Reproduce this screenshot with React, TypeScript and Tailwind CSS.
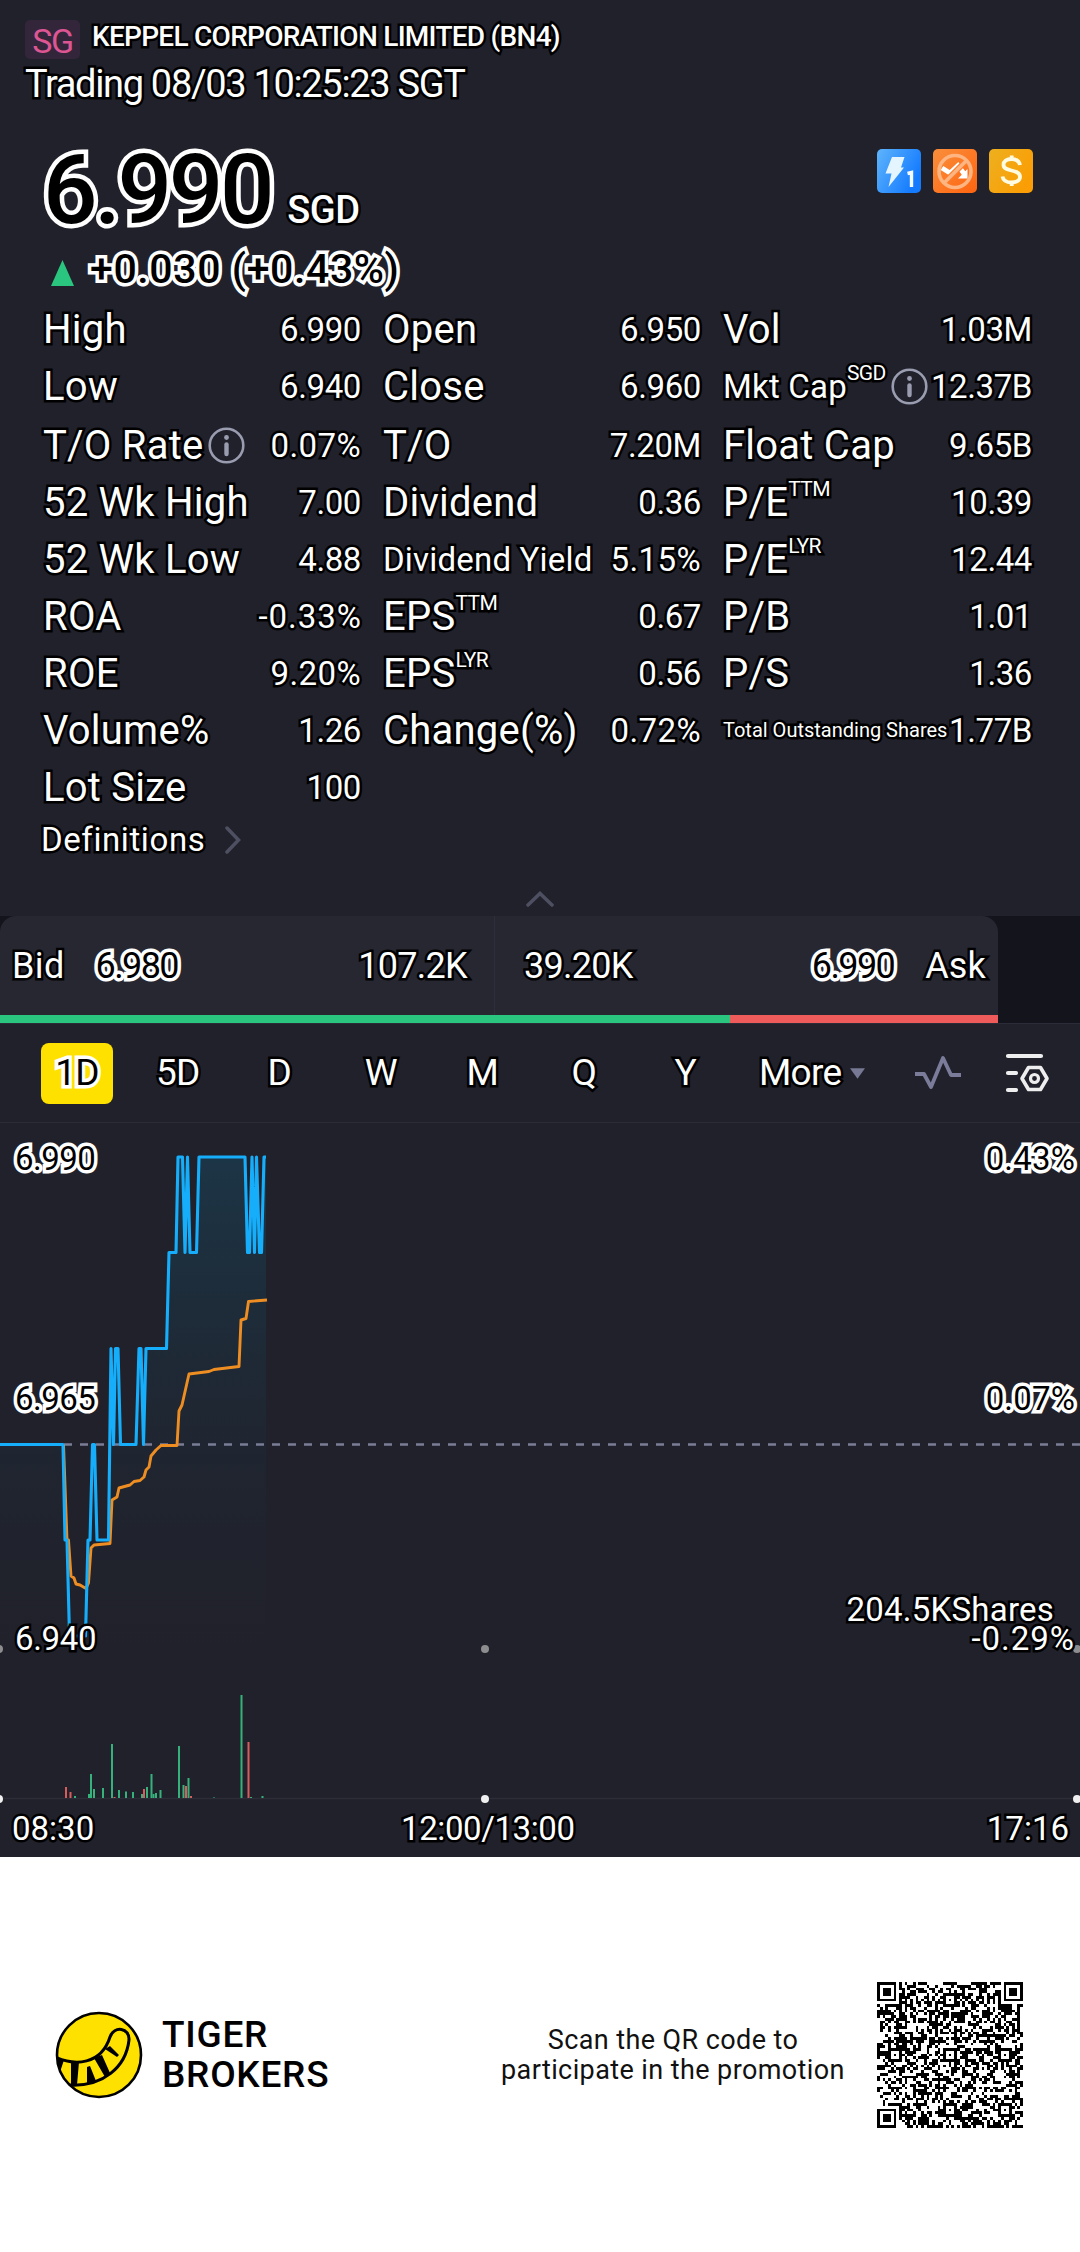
import type { ReactNode } from "react";

type Stat = { label: ReactNode; value: string; small?: "md" | "xs"; info?: boolean };

const outline = "text-white [paint-order:stroke_fill] [-webkit-text-stroke:5px_black]";
const outlineInverse = "text-black [paint-order:stroke_fill] [-webkit-text-stroke:7px_white]";

const withSup = (text: string, sup: string, align = "align-[20px]") => (
  <>
    {text}
    <span className={`text-[21px] leading-[0] tracking-[-0.03em] ${align}`}>{sup}</span>
  </>
);

const columns: { width: string; stats: Stat[] }[] = [
  {
    width: "w-[318px]",
    stats: [
      { label: "High", value: "6.990" },
      { label: "Low", value: "6.940" },
      { label: "T/O Rate", value: "0.07%", info: true },
      { label: "52 Wk High", value: "7.00" },
      { label: "52 Wk Low", value: "4.88" },
      { label: "ROA", value: "-0.33%" },
      { label: "ROE", value: "9.20%" },
      { label: "Volume%", value: "1.26" },
      { label: "Lot Size", value: "100" },
    ],
  },
  {
    width: "w-[318px]",
    stats: [
      { label: "Open", value: "6.950" },
      { label: "Close", value: "6.960" },
      { label: "T/O", value: "7.20M" },
      { label: "Dividend", value: "0.36" },
      { label: "Dividend Yield", value: "5.15%", small: "md" },
      { label: withSup("EPS", "TTM"), value: "0.67" },
      { label: withSup("EPS", "LYR"), value: "0.56" },
      { label: "Change(%)", value: "0.72%" },
    ],
  },
  {
    width: "w-[309px]",
    stats: [
      { label: "Vol", value: "1.03M" },
      { label: withSup("Mkt Cap", "SGD", "align-[18px]"), value: "12.37B", small: "md", info: true },
      { label: "Float Cap", value: "9.65B" },
      { label: withSup("P/E", "TTM"), value: "10.39" },
      { label: withSup("P/E", "LYR"), value: "12.44" },
      { label: "P/B", value: "1.01" },
      { label: "P/S", value: "1.36" },
      { label: "Total Outstanding Shares", value: "1.77B", small: "xs" },
    ],
  },
];

const labelSize = {
  lg: "text-[40px] tracking-[0.006em]",
  md: "text-[33px] tracking-[0.006em]",
  xs: "text-[20px] [-webkit-text-stroke-width:4px]",
};

// percentages are set a little wider than plain numbers
function valueTracking(value: string) {
  if (value.startsWith("-")) return "tracking-[0.03em] -mr-px";
  if (value.endsWith("%")) return "tracking-[0.012em]";
  return "tracking-[-0.012em]";
}

function InfoIcon() {
  return (
    <svg width="37" height="37" viewBox="0 0 37 37" className="shrink-0">
      <circle cx="18.5" cy="18.5" r="16.8" fill="none" stroke="#9a9cb0" strokeWidth="2.6" />
      <circle cx="18.5" cy="10.5" r="2.4" fill="#9a9cb0" />
      <path d="M18.5 17.500v9.500" stroke="#9a9cb0" strokeWidth="4.400" strokeLinecap="round" />
    </svg>
  );
}

function StatRow({ stat, spaced }: { stat: Stat; spaced: boolean }) {
  return (
    <div className={`flex h-[57px] items-center justify-between whitespace-nowrap ${spaced ? "mt-[2px]" : ""}`}>
      <div className="flex items-center gap-[5px]">
        <span className={`leading-[57px] ${outline} ${labelSize[stat.small ?? "lg"]}`}>{stat.label}</span>
        {stat.info && <InfoIcon />}
      </div>
      <span className={`text-[33px] leading-[57px] ${valueTracking(stat.value)} ${outline}`}>{stat.value}</span>
    </div>
  );
}

function Badges() {
  return (
    <div className="flex gap-3">
      <svg width="44" height="44" viewBox="0 0 44 44">
        <defs>
          <linearGradient id="blue" x1="0" y1="0" x2="1" y2="0.5">
            <stop offset="0" stopColor="#5fb4fb" />
            <stop offset="1" stopColor="#147bff" />
          </linearGradient>
        </defs>
        <rect width="44" height="44" rx="5" fill="url(#blue)" />
        <path d="M15 8h12.500l-3.500 10.500h3L11.500 38l3-13.500H8.500z" fill="#e4f5ff" />
        <path d="M30.500 24.500l4-1v14.500" fill="none" stroke="#f4fbff" strokeWidth="3.400" />
      </svg>
      <svg width="44" height="44" viewBox="0 0 44 44">
        <defs>
          <linearGradient id="orange" x1="0" y1="0" x2="1" y2="1">
            <stop offset="0" stopColor="#f98f3c" />
            <stop offset="1" stopColor="#ff6410" />
          </linearGradient>
        </defs>
        <rect width="44" height="44" rx="5" fill="url(#orange)" />
        <path d="M9 19l8 5 8-7.500 7 9.500" fill="none" stroke="#fff" strokeWidth="4.800" />
        <path d="M34.500 20v9.500H25z" fill="#fff" />
        <path d="M33.500 11.500l-22.500 22.500" stroke="#ff7a2a" strokeWidth="6" />
        <path d="M33.500 11.500l-22.500 22.500" stroke="#ffb581" strokeWidth="3.600" />
        <circle cx="22" cy="22.500" r="16" fill="none" stroke="#ffb581" strokeWidth="3.600" />
      </svg>
      <svg width="44" height="44" viewBox="0 0 44 44">
        <defs>
          <linearGradient id="gold" x1="0" y1="0" x2="1" y2="0.6">
            <stop offset="0" stopColor="#edb01f" />
            <stop offset="1" stopColor="#fb9d04" />
          </linearGradient>
        </defs>
        <rect width="44" height="44" rx="5" fill="url(#gold)" />
        <path
          d="M31 16c-.8-4-4.300-6-8.500-6-4.800 0-8 2.300-8 5.800 0 3.700 3.500 4.700 8 5.700 4.800 1.100 8.500 2.200 8.500 6.200 0 3.600-3.500 5.800-8.500 5.800-4.800 0-8.300-2-9-6M22.700 6.500v4M22.700 33v4"
          fill="none"
          stroke="#fffbe0"
          strokeWidth="3.800"
        />
      </svg>
    </div>
  );
}

const bluePoints =
  "0,1444.5 63,1444.5 65,1540 67,1540 69.5,1636 85.5,1636 88,1540 90,1540 92.5,1444.5 94.5,1444.5 97,1540 108.5,1540 111,1348.5 113.5,1444.5 115.500,1348.500 118,1348.500 120.500,1444.500 136,1444.500 139,1348.500 141,1348.500 143.500,1444.500 146,1348.500 166.500,1348.500 169,1252.500 176,1252.500 178,1157 182.500,1157 185,1252.500 187.500,1157 190,1252.500 196.500,1252.500 199,1157 245,1157 247.500,1252.500 249.500,1252.500 252,1157 254.500,1252.500 256.500,1157 259.500,1252.500 261.500,1252.500 264,1157 266,1157";

const orangePoints =
  "63.5,1444.5 67,1540 68.5,1540 71,1576 74,1578 76,1584 80,1585 86,1588.500 88.500,1583 91,1548 94,1545 110,1543.500 112,1500 117,1497 119,1488 130,1485 134,1481.500 140,1480.500 144,1477 146,1470 149,1467 151,1456 156,1450 161,1445.500 177,1445.500 179,1411 182,1405 189,1374 209,1371.500 214,1369.500 239,1366.500 241,1320 246,1318.500 248.500,1301.500 267,1300";

// x, height, colour
const volumeBars: [number, number, "g" | "r"][] = [
  [66, 11, "r"], [70.5, 6, "r"], [75, 2, "g"], [89, 4, "g"], [91, 24, "g"], [94, 9, "g"],
  [103, 10, "g"], [112, 54, "g"], [114.5, 1, "r"], [119, 8, "g"], [126, 6.5, "g"], [133, 6, "g"],
  [142, 4, "g"], [144, 9, "r"], [147, 11, "g"], [151.5, 24, "g"], [153.5, 4, "g"], [156, 5, "g"],
  [160.5, 8, "g"], [179, 52, "g"], [183.5, 13, "g"], [186, 12, "r"], [188.5, 20, "g"], [191, 2, "r"],
  [214, 0.5, "g"], [241.5, 103, "g"], [248.5, 56, "r"], [251, 1, "g"], [262.5, 2, "g"],
];

function Chart() {
  const axis = "absolute text-[33px] leading-[28px]";
  return (
    <div className="relative h-[734px] overflow-hidden">
      <svg width="1080" height="734" viewBox="0 1123 1080 734" className="block">
        <defs>
          <linearGradient id="area" gradientUnits="userSpaceOnUse" x1="0" y1="1157" x2="0" y2="1650">
            <stop offset="0" stopColor="#1c3546" />
            <stop offset="1" stopColor="#1f222b" stopOpacity="0.2" />
          </linearGradient>
        </defs>
        <polygon points={`0,1650 ${bluePoints} 266,1650`} fill="url(#area)" />
        <path d="M0 1444.500H1080" stroke="#7b7d96" strokeWidth="2.500" strokeDasharray="8 8" />
        <polyline points={orangePoints} fill="none" stroke="#ee8e22" strokeWidth="2.900" strokeLinejoin="round" />
        <polyline points={bluePoints} fill="none" stroke="#16aefb" strokeWidth="3.100" strokeLinejoin="round" />
        <path d="M0 1798.500H1080" stroke="#2d2d39" strokeWidth="1.500" />
        {volumeBars.map(([x, h, c]) => (
          <rect key={x} x={x - 1} y={1798 - h} width="2" height={h} fill={c === "g" ? "#35b27b" : "#d95c5c"} />
        ))}
        {[-1, 485, 1077].map((x) => (
          <g key={x}>
            <circle cx={x} cy="1649" r="4" fill="#8d8d90" />
            <circle cx={x} cy="1799" r="4" fill="#f0f0f0" />
          </g>
        ))}
      </svg>
      <span className={`${axis} ${outlineInverse} left-[15px] top-[22px] tracking-[-0.015em]`}>6.990</span>
      <span className={`${axis} ${outlineInverse} left-[15px] top-[262px] tracking-[-0.015em]`}>6.965</span>
      <span className={`${axis} ${outline} left-[15px] top-[502px] tracking-[-0.01em]`}>6.940</span>
      <span className={`${axis} ${outlineInverse} right-[5px] top-[22px] tracking-[0.005em]`}>0.43%</span>
      <span className={`${axis} ${outlineInverse} right-[5px] top-[262px] tracking-[0.005em]`}>0.07%</span>
      <span className={`${axis} ${outline} right-[26px] top-[473px] tracking-[0.007em]`}>204.5KShares</span>
      <span className={`${axis} ${outline} right-[5px] top-[502px] tracking-[0.03em]`}>-0.29%</span>
      <span className={`${axis} ${outline} left-[12px] top-[692px]`}>08:30</span>
      <span className={`${axis} ${outline} left-[401px] top-[692px] tracking-[-0.012em]`}>12:00/13:00</span>
      <span className={`${axis} ${outline} right-[11px] top-[692px]`}>17:16</span>
    </div>
  );
}

function TigerLogo() {
  return (
    <svg width="88" height="88" viewBox="0 0 88 88">
      <defs>
        <clipPath id="disc">
          <circle cx="44" cy="44" r="42" />
        </clipPath>
      </defs>
      <circle cx="44" cy="44" r="42" fill="#ffe100" />
      <g clipPath="url(#disc)">
        <path d="M0 46C20 55 46 54 55 26c4-12 20-9 19 3C71 56 48 76 14 74" fill="none" stroke="#000" strokeWidth="3" />
        <path d="M0 45l9 4-4 12H0zM16 51h8l-2 23h-6zM39 47l8-3 8 18-5 4zM50 38l5-3 9 9-2 2zM32 56l3-1 6 15-9 3z" fill="#000" />
      </g>
      <circle cx="44" cy="44" r="42" fill="none" stroke="#000" strokeWidth="2.600" />
    </svg>
  );
}

const QR_SIZE = 53;

function inFinder(x: number, y: number) {
  return (x < 8 && y < 8) || (x > QR_SIZE - 9 && y < 8) || (x < 8 && y > QR_SIZE - 9);
}

function qrPath() {
  let seed = 20230803;
  let d = "";
  const centers = [6, 26, 46];
  for (let y = 0; y < QR_SIZE; y++) {
    for (let x = 0; x < QR_SIZE; x++) {
      seed = (seed * 1103515245 + 12345) % 2147483648;
      let dark = (seed >> 16) % 2 === 0;
      if (x === 6 || y === 6) dark = (x + y) % 2 === 0;
      const cx = centers.find((c) => Math.abs(c - x) < 3);
      const cy = centers.find((c) => Math.abs(c - y) < 3);
      if (cx !== undefined && cy !== undefined) {
        dark = Math.max(Math.abs(cx - x), Math.abs(cy - y)) !== 1;
      }
      if (dark && !inFinder(x, y)) d += `M${x} ${y}h1v1h-1z`;
    }
  }
  return d;
}

function QrCode() {
  return (
    <svg width="146" height="146" viewBox={`0 0 ${QR_SIZE} ${QR_SIZE}`} shapeRendering="crispEdges">
      <path d={qrPath()} />
      {[[0, 0], [46, 0], [0, 46]].map(([x, y]) => (
        <g key={`${x}-${y}`}>
          <path fillRule="evenodd" d={`M${x} ${y}h7v7h-7zM${x + 1} ${y + 1}v5h5v-5z`} />
          <rect x={x + 2} y={y + 2} width="3" height="3" />
        </g>
      ))}
    </svg>
  );
}

const ranges = ["5D", "D", "W", "M", "Q", "Y"];

export default function App() {
  return (
    <main className="h-[2252px] w-[1080px] overflow-hidden bg-white font-['Roboto',sans-serif]">
      <div className="bg-[#21212b]">
        <header className="flex h-[118px] flex-col pl-[25px] pt-5">
          <div className="flex h-[39px] gap-3">
            <span className="flex h-[39px] w-[55px] items-center justify-center rounded-[5px] bg-[#33263a] pt-[3px] text-[34px] tracking-[-0.04em] text-[#dd5593]">
              SG
            </span>
            <h1 className={`text-[28px] font-medium leading-[34px] tracking-[-0.026em] ${outline}`}>
              KEPPEL CORPORATION LIMITED (BN4)
            </h1>
          </div>
          <p className={`mt-[3px] text-[38px] leading-[44px] tracking-[-0.035em] ${outline}`}>Trading 08/03 10:25:23 SGT</p>
        </header>

        <section className="flex h-[183px] justify-between pl-[43px] pr-[47px]">
          <div>
            <div className="mt-[4px] flex h-[125px] items-baseline gap-4 leading-[136px]">
              <span className="text-[96px] font-medium tracking-[-0.035em] text-black [-webkit-text-stroke:9px_white] [paint-order:stroke_fill]">
                6.990
              </span>
              <span className={`text-[38px] font-medium tracking-[-0.01em] ${outline}`}>SGD</span>
            </div>
            <div className="flex items-center gap-[16px] pl-2">
              <svg width="23" height="26" viewBox="0 0 23 26" className="mt-2">
                <path d="M11.500 0L23 26H0z" fill="#2ac67f" />
              </svg>
              <span className={`text-[41px] font-medium leading-[44px] tracking-[0.015em] ${outlineInverse}`}>+0.030 (+0.43%)</span>
            </div>
          </div>
          <div className="pt-[31px]">
            <Badges />
          </div>
        </section>

        <section className="flex gap-[22px] pl-[43px]">
          {columns.map((col, i) => (
            <div key={i} className={col.width}>
              {col.stats.map((stat, row) => (
                <StatRow key={row} stat={stat} spaced={row === 2} />
              ))}
            </div>
          ))}
        </section>

        <div className="flex h-[47px] items-center gap-[20px] pl-[41px]">
          <span className={`text-[33px] tracking-[0.018em] ${outline}`}>Definitions</span>
          <svg width="16" height="28" viewBox="0 0 16 28" fill="none" stroke="#4e5062" strokeWidth="3.500" strokeLinecap="round">
            <path d="M2 2l11.500 12L2 26" />
          </svg>
        </div>
        <div className="flex h-[53px] justify-center pt-[28px]">
          <svg width="28" height="16" viewBox="0 0 28 16" fill="none" stroke="#4e5062" strokeWidth="3.500" strokeLinecap="round">
            <path d="M2 14L14 2.500 26 14" />
          </svg>
        </div>

        <section className="flex h-[107px] bg-[#14141d]">
          <div className="flex w-[998px] flex-col">
            <div className="flex h-[99px] rounded-t-[16px] bg-[#272732] text-[36px] tracking-[-0.02em]">
              <div className="flex w-[495px] items-center border-r border-[#2e2e3a] pl-[12px] pr-[27px]">
                <span className={`tracking-[0.01em] ${outline}`}>Bid</span>
                <span className={`ml-[31px] tracking-[-0.045em] ${outlineInverse}`}>6.980</span>
                <span className={`ml-auto ${outline}`}>107.2K</span>
              </div>
              <div className="flex flex-1 items-center pl-[29px] pr-[12px]">
                <span className={outline}>39.20K</span>
                <span className={`ml-auto tracking-[-0.045em] ${outlineInverse}`}>6.990</span>
                <span className={`ml-[31px] tracking-[0.005em] ${outline}`}>Ask</span>
              </div>
            </div>
            <div className="flex h-2">
              <div className="w-[730px] bg-[#2ac67f]" />
              <div className="flex-1 bg-[#ef5a5a]" />
            </div>
          </div>
        </section>

        <nav className="flex h-[100px] items-center border-y border-[#2c2c38] pl-[41px] text-[37px] tracking-[-0.02em]">
          <span className="flex h-[61px] w-[72px] items-center justify-center rounded-[8px] bg-[#ffe100]">
            <span className={outlineInverse}>1D</span>
          </span>
          <div className="ml-[14px] flex">
            {ranges.map((r) => (
              <span key={r} className={`w-[101.5px] text-center ${outline}`}>
                {r}
              </span>
            ))}
          </div>
          <span className={`ml-[23px] ${outline}`}>More</span>
          <svg width="15" height="11" viewBox="0 0 14 10" className="ml-[9px]">
            <path d="M0 0h14L7 10z" fill="#767894" />
          </svg>
          <svg width="48" height="36" viewBox="0 0 48 36" className="ml-[49px]" fill="none" stroke="#7a7c9a" strokeWidth="3.800" strokeLinejoin="round">
            <path d="M1 19h9l7 13L29 3l8 17h10" />
          </svg>
          <svg width="46" height="42" viewBox="0 0 46 42" className="ml-[43px]" fill="none" stroke="#eee" strokeWidth="4.200" strokeLinecap="round">
            <path d="M3 4h33M3 21h8M3 38h8" />
            <path d="M23.500 15.500h12l6.500 11-6.500 11h-12l-6.500-11z" strokeWidth="3.600" strokeLinejoin="round" />
            <circle cx="29.500" cy="26.500" r="4" strokeWidth="3.200" />
          </svg>
        </nav>

        <Chart />
      </div>

      <footer className="flex h-[395px] items-start bg-white pl-[55px] text-black">
        <div className="mt-[154px] shrink-0">
          <TigerLogo />
        </div>
        <div className="ml-[19px] mt-[158px] w-[168px] shrink-0 text-[37px] font-medium leading-[40px] tracking-[0.02em]">
          TIGER
          <br />
          BROKERS
        </div>
        <div className="ml-[165px] mt-[168px] w-[356px] shrink-0 whitespace-nowrap text-center text-[27px] leading-[30px] tracking-[0.015em] text-[#111]">
          Scan the QR code to
          <br />
          participate in the promotion
        </div>
        <div className="ml-[26px] mt-[125px] shrink-0">
          <QrCode />
        </div>
      </footer>
    </main>
  );
}
